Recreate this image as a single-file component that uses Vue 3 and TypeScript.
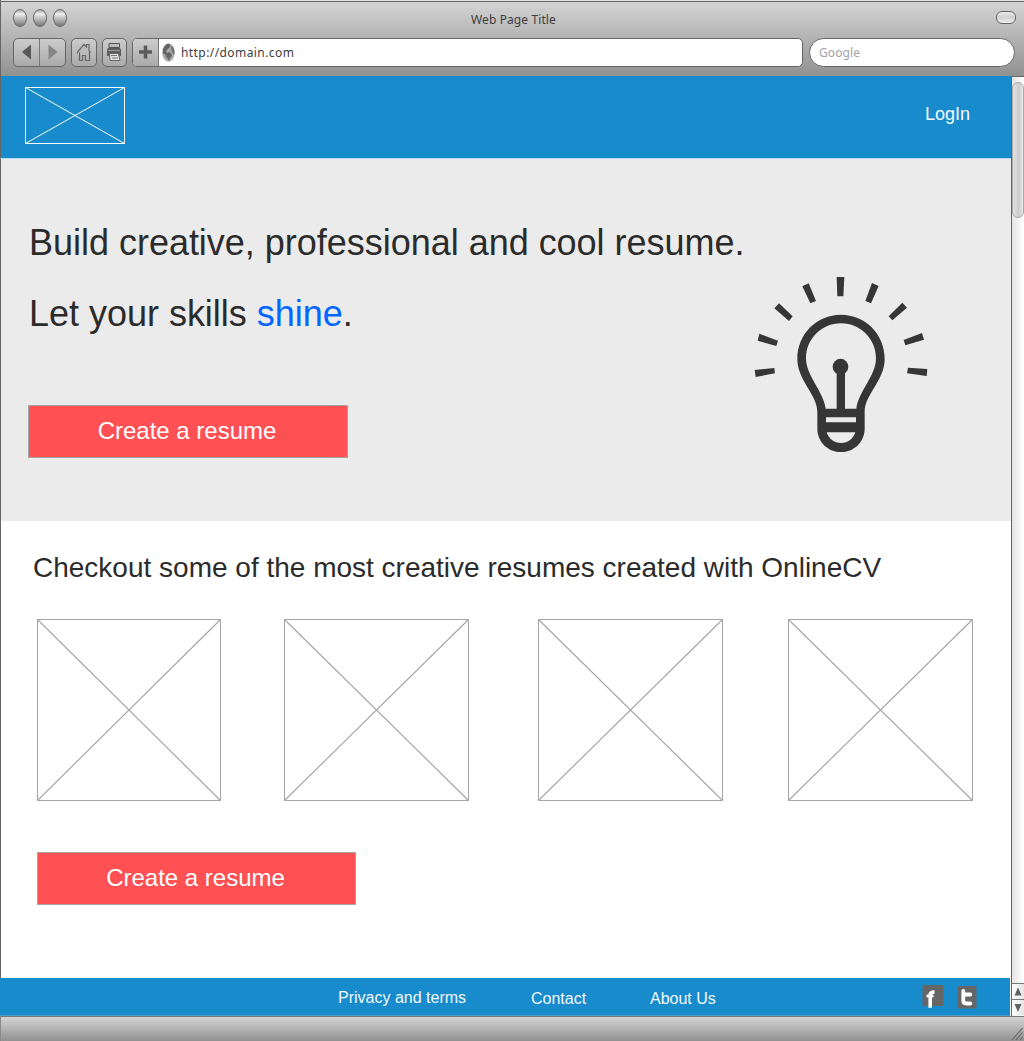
<script setup lang="ts">
interface FooterLink {
  label: string
  kind: string
}

const samples: string[] = ['first', 'second', 'third', 'fourth']

const footerLinks: FooterLink[] = [
  { label: 'Privacy and terms', kind: 'privacy' },
  { label: 'Contact', kind: 'contact' },
  { label: 'About Us', kind: 'about' },
]
</script>

<template>
  <div class="window">
    <header class="chrome">
      <div class="titlebar">
        <div class="lights"><i></i><i></i><i></i></div>
        <div class="title">Web Page Title</div>
        <div class="pill"></div>
      </div>
      <div class="toolbar">
        <div class="btn history">
          <span class="half">
            <svg width="25" height="27" viewBox="0 0 25 27"><path d="M8 13 17 5.500V20.500z" fill="#585858" /></svg>
          </span>
          <span class="half">
            <svg width="25" height="27" viewBox="0 0 25 27"><path d="M17.500 13 8.500 5.500V20.500z" fill="#858585" /></svg>
          </span>
        </div>
        <div class="btn home">
          <svg width="24" height="27" viewBox="0 0 24 27" fill="none" stroke="#666" stroke-width="1.200">
            <path d="M7.500 13.500V21.500H10.500V16.500H13.500V21.500H17.500V12.500M5.500 14.500V13L12 5.500 14.500 8V5.500H17V11.500L18.500 13.500" />
          </svg>
        </div>
        <div class="btn print">
          <svg width="23" height="27" viewBox="0 0 23 27">
            <path d="M6 4.500H16.500V8.500H6z" fill="#bbb" stroke="#555" />
            <path d="M5 9H17L18 10.500V17H4V10.500z" fill="#5d5d5d" />
            <path d="M5 11.500H17" stroke="#999" />
            <path d="M6.500 14.500H15.500L17 21.500H7z" fill="#e2e2e2" stroke="#666" />
            <path d="M8 16.500H14M9 19H15" stroke="#777" />
          </svg>
        </div>
        <div class="address">
          <span class="plus">
            <svg width="25" height="27" viewBox="0 0 25 27"><path d="M12.500 6.500V19.500M6 13H19" stroke="#5a5a5a" stroke-width="3.500" /></svg>
          </span>
          <svg class="globe" width="13" height="19" viewBox="0 0 13 19">
            <ellipse cx="6.500" cy="9.500" rx="6.300" ry="9.200" fill="#aaa" />
            <path d="M5 1 3 3 1 6 1 11 3 11 4 14 6 16 7 18 8 15 10 13 9 10 7 9 5 10 4 8 6 6 8 4 8 1z" fill="#656565" />
            <path d="M9 3 11 4 12.500 8 12 12 10 9 9 6z" fill="#747474" />
          </svg>
          <span class="url">http://domain.com</span>
        </div>
        <div class="search">Google</div>
      </div>
    </header>

    <div class="viewport">
      <main class="page">
        <nav class="nav">
          <svg class="logo" width="100" height="57" viewBox="0 0 100 57" fill="none" stroke="#fff">
            <path d="M.5.5H99.500V56.500H.5z" /><path d="M.5.5 99.500 56.500M99.500.5.5 56.500" />
          </svg>
          <a class="login">LogIn</a>
        </nav>

        <section class="hero">
          <div class="pitch">
            <h1>Build creative, professional and cool resume.</h1>
            <h1>Let your skills <span class="shine">shine</span>.</h1>
            <button class="cta">Create a resume</button>
          </div>
          <svg class="bulb" width="200" height="200" viewBox="0 0 600 600">
            <g fill="#363636">
              <path d="M290 36H313L310 94H292z" />
              <path d="M187 64 206 55 228 108 211 115z" />
              <path d="M396 54 416 63 393 115 376 108z" />
              <path d="M103 130 117 115 158 154 147 168z" />
              <path d="M487 113 501 128 457 166 446 154z" />
              <path d="M58 206 114 227 109 243 53 227z" />
              <path d="M546 204 552 224 496 241 491 225z" />
              <path d="M44 315 103 309 105 325 47 336z" />
              <path d="M504 308 562 312 560 333 501 325z" />
              <circle cx="301.500" cy="305" r="23.500" />
              <path d="M290 315H315V436H290z" />
              <path fill-rule="evenodd" d="M303 149C230 149 172 207 172 282 172 346 232 389 232 440V494C234 532 264 561 303 561S372 532 374 494V440C374 389 434 346 434 282 434 207 376 149 303 149zM303 175C361 175 408 222 408 280 408 333 356 378 349 431H257C250 378 198 333 198 280 198 222 245 175 303 175zM258 457V472H348V457zM260 502C266 521 282 534 303 534S340 521 346 502z" />
            </g>
          </svg>
        </section>

        <section class="gallery">
          <h2>Checkout some of the most creative resumes created with OnlineCV</h2>
          <div class="thumbs">
            <svg
              v-for="name in samples"
              :key="name"
              :class="['thumb', name]"
              viewBox="0 0 185 182"
              preserveAspectRatio="none"
              fill="none"
              stroke="#a5a5a5"
            >
              <path d="M.5.5H184.500V181.500H.5z" /><path d="M.5.5 184.500 181.500M184.500.5.5 181.500" stroke-width="1.150" />
            </svg>
          </div>
          <button class="cta">Create a resume</button>
        </section>

        <footer class="footer">
          <a v-for="link in footerLinks" :key="link.kind" :class="link.kind">{{ link.label }}</a>
          <svg class="facebook" width="22" height="23" viewBox="0 0 22 23">
            <path d="M.500 0H21.500V21H.500z" fill="#666" />
            <path d="M4.500 11H11.500" fill="none" stroke="#fff" stroke-width="2.800" />
            <path d="M8.200 22.700V9.500Q8.200 6.800 12.500 7.200" fill="none" stroke="#fff" stroke-width="3.600" />
          </svg>
          <svg class="twitter" width="20" height="23" viewBox="0 0 20 23">
            <path d="M.500 0H19.500V22.500H.500z" fill="#666" />
            <path d="M6.300 5V14.500Q6.300 17.500 9.500 17.500H13.300M6.500 8.500H13.300" fill="none" stroke="#fff" stroke-width="3.800" stroke-linecap="round" />
          </svg>
        </footer>
      </main>
      <aside class="scrollbar">
        <div class="track"><div class="handle"></div></div>
        <div class="arrow"><svg width="12" height="15" viewBox="0 0 12 15"><path d="M6 3.500 9.500 11.500H2.500z" fill="#606060" /></svg></div>
        <div class="arrow"><svg width="12" height="15" viewBox="0 0 12 15"><path d="M6 12 9.500 4H2.500z" fill="#606060" /></svg></div>
      </aside>
    </div>

    <div class="status">
      <svg width="12" height="14" viewBox="0 0 12 14" stroke="#666" stroke-width="1.100"><path d="M0 13 10.500 1M4 13 10.500 5.500M8 13 10.500 10" /></svg>
    </div>
  </div>
</template>

<style>
body {
  margin: 0;
}
</style>

<style scoped>
* {
  box-sizing: border-box;
}
svg {
  display: block;
  flex: none;
}
.window {
  width: 1024px;
  height: 1041px;
  display: flex;
  flex-direction: column;
  overflow: hidden;
  background: #fff;
  font-family: "Liberation Sans", Arial, sans-serif;
}
.chrome {
  height: 76px;
  flex: none;
  border-left: 1px solid #666;
  background: linear-gradient(#e0e0e0 0 1px, #666 1px 2px, #d3d3d3 2px, #919191 76px);
  font-family: "Noto Sans", sans-serif;
}
.titlebar {
  display: flex;
  justify-content: space-between;
  height: 38px;
  padding: 9px 8px 0 12px;
}
.lights {
  display: flex;
  gap: 6px;
  width: 100px;
}
.lights i {
  width: 14px;
  height: 18px;
  border: 1px solid #676767;
  border-radius: 50%;
  background: linear-gradient(#aaa, #eee 25%, #c4c4c4 50%, #777);
}
.title {
  margin: 2px 0 0 -2px;
  font-size: 12px;
  line-height: 18px;
  letter-spacing: 0.1px;
  color: #3e3e3e;
}
.pill {
  width: 20px;
  height: 13px;
  margin: 2px 0 0 80px;
  border: 1px solid #666;
  border-radius: 6px;
  background: linear-gradient(#e8e8e8, #d2d2d2 50%, #eee);
}
.toolbar {
  display: flex;
  height: 29px;
  padding-left: 12px;
}
.btn {
  display: flex;
  flex: none;
  height: 29px;
  border: 1px solid #666;
  border-radius: 5px;
  background: linear-gradient(#ccc, #aaa);
}
.history {
  width: 53px;
  margin-right: 5px;
}
.half + .half {
  border-left: 1px solid #777;
}
.home {
  width: 26px;
  margin-right: 5px;
}
.print {
  width: 25px;
  margin-right: 5px;
}
.address {
  display: flex;
  align-items: center;
  width: 671px;
  margin-right: 6px;
  border: 1px solid #666;
  border-radius: 5px;
  background: #fff;
  overflow: hidden;
}
.plus {
  width: 26px;
  border-right: 1px solid #777;
  background: linear-gradient(#ccc, #aaa);
}
.globe {
  margin: 0 6px 1px 3px;
}
.url {
  font-size: 12px;
  letter-spacing: 0.42px;
  color: #3e3e3e;
}
.search {
  width: 206px;
  padding-left: 9px;
  border: 1px solid #666;
  border-radius: 15px;
  background: #fff;
  font-size: 12px;
  line-height: 27px;
  letter-spacing: 0.1px;
  color: #a4a4a4;
}
.viewport {
  display: flex;
  height: 940px;
}
.page {
  width: 1011px;
}
.nav {
  display: flex;
  justify-content: space-between;
  height: 83px;
  padding: 11px 41px 0 24px;
  border-left: 1px solid #666;
  border-bottom: 1px solid #b9d9ed;
  background: #188bcd;
}
.login {
  padding-top: 17px;
  font-size: 18px;
  line-height: 20px;
  color: #f4f9fc;
}
.hero {
  display: flex;
  height: 362px;
  padding-left: 27px;
  border-left: 1px solid #666;
  background: #ebebeb;
}
.pitch {
  width: 712px;
  padding-top: 63px;
}
h1,
h2 {
  margin: 0;
  font-weight: 400;
  color: #2b2b2b;
  white-space: nowrap;
}
h1 {
  margin: 0 0 29px 1px;
  font-size: 36px;
  line-height: 42px;
  letter-spacing: -0.02px;
}
.shine {
  color: #0066ff;
}
.cta {
  display: block;
  width: 320px;
  height: 53px;
  padding: 0 2px 1px 0;
  border: 1px solid #a5a5a5;
  background: #ff5054;
  color: #fff;
  font: 24px/50px "Liberation Sans", Arial, sans-serif;
}
.pitch .cta {
  margin-top: 70px;
}
.bulb {
  margin-top: 106px;
}
.gallery {
  height: 457px;
  padding: 31px 0 0 32px;
  border-left: 1px solid #666;
}
h2 {
  font-size: 28px;
  line-height: 32px;
}
.thumbs {
  display: flex;
  margin: 35px 0 51px 4px;
}
.thumb {
  width: 185px;
  height: 182px;
}
.first {
  width: 184px;
  margin-right: 63px;
}
.second {
  margin-right: 69px;
}
.third {
  margin-right: 65px;
}
.gallery .cta {
  width: 319px;
  margin-left: 4px;
}
.footer {
  display: flex;
  width: 1010px;
  height: 38px;
  padding-left: 338px;
  border-bottom: 1px solid #4c9ccd;
  background: #188bcd;
  color: #f2f8fc;
  font-size: 16px;
  line-height: 18px;
}
.privacy {
  width: 193px;
  padding-top: 11px;
}
.contact {
  width: 119px;
  padding-top: 12px;
}
.about {
  width: 272px;
  padding-top: 12px;
}
.facebook {
  margin: 7px 13px 0 0;
}
.twitter {
  margin-top: 8px;
}
.scrollbar {
  width: 13px;
  border-left: 1px solid #666;
  border-top: 1px solid #666;
  background: #f4f4f4;
}
.track {
  height: 906px;
  padding-top: 5px;
  background: linear-gradient(90deg, #e4e4e4, #fff);
}
.handle {
  width: 12px;
  height: 136px;
  border: 1px solid #aaa;
  border-radius: 6px;
  background: linear-gradient(90deg, #e2e2e2, #cbcbcb 60%, #e8e8e8);
}
.arrow {
  height: 16px;
  border-top: 1px solid #777;
  background: linear-gradient(90deg, #fff, #e4e4e4);
}
.status {
  display: flex;
  justify-content: flex-end;
  align-items: flex-end;
  height: 25px;
  border-left: 1px solid #888;
  border-top: 1px solid #777;
  background: linear-gradient(#d4d4d4, #919191);
}
</style>
